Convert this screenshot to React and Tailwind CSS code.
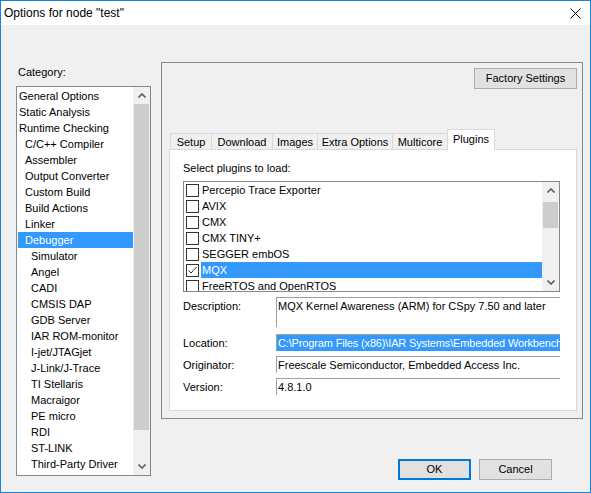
import React from "react";

const categories = [
  ["General Options", 0],
  ["Static Analysis", 0],
  ["Runtime Checking", 0],
  ["C/C++ Compiler", 1],
  ["Assembler", 1],
  ["Output Converter", 1],
  ["Custom Build", 1],
  ["Build Actions", 1],
  ["Linker", 1],
  ["Debugger", 1],
  ["Simulator", 2],
  ["Angel", 2],
  ["CADI", 2],
  ["CMSIS DAP", 2],
  ["GDB Server", 2],
  ["IAR ROM-monitor", 2],
  ["I-jet/JTAGjet", 2],
  ["J-Link/J-Trace", 2],
  ["TI Stellaris", 2],
  ["Macraigor", 2],
  ["PE micro", 2],
  ["RDI", 2],
  ["ST-LINK", 2],
  ["Third-Party Driver", 2],
];

const indent = ["pl-[1px]", "pl-[7px]", "pl-[13px]"];

const plugins = [
  { name: "Percepio Trace Exporter", checked: false },
  { name: "AVIX", checked: false },
  { name: "CMX", checked: false },
  { name: "CMX TINY+", checked: false },
  { name: "SEGGER embOS", checked: false },
  { name: "MQX", checked: true },
  { name: "FreeRTOS and OpenRTOS", checked: false },
];

const tabs = [
  { label: "Setup", w: "w-[41px]" },
  { label: "Download", w: "w-[61px]" },
  { label: "Images", w: "w-[45px]" },
  { label: "Extra Options", w: "w-[75px]" },
  { label: "Multicore", w: "w-[55px]" },
];

const Chevron = ({ down }) => (
  <svg width="8" height="5" viewBox="0 0 8 5">
    <polyline
      points={down ? "0.5,0.5 4,4 7.5,0.5" : "0.5,4.5 4,1 7.5,4.5"}
      fill="none"
      stroke="#606060"
      strokeWidth="1.6"
    />
  </svg>
);

const ScrollBar = ({ thumbTop, thumbHeight }) => (
  <div className="w-[17px] h-full bg-[#f0f0f0] flex flex-col shrink-0">
    <div className="h-[17px] flex items-center justify-center">
      <Chevron />
    </div>
    <div className="bg-[#cdcdcd] mx-[1px]" style={{ marginTop: thumbTop, height: thumbHeight }} />
    <div className="flex-1" />
    <div className="h-[17px] flex items-center justify-center">
      <Chevron down />
    </div>
  </div>
);

const Checkbox = ({ checked }) => (
  <div className="w-[13px] h-[13px] border border-[#333] bg-white shrink-0 flex items-center justify-center">
    {checked && (
      <svg width="11" height="11" viewBox="0 0 11 11">
        <polyline points="1.5,5.5 4,8 9.5,2" fill="none" stroke="#333" strokeWidth="1" />
      </svg>
    )}
  </div>
);

export default function App() {
  return (
    <div className="w-[591px] h-[493px] border border-[#1883d7] bg-[#f0f0f0] flex flex-col overflow-hidden text-[11px] text-black font-['Liberation_Sans',Arial,sans-serif]">
      <div className="h-[24px] bg-white flex items-center justify-between pl-[3px] pr-[9px] shrink-0">
        <span className="text-[12px]">Options for node "test"</span>
        <svg width="11" height="11" viewBox="0 0 11 11">
          <line x1="0.5" y1="0.5" x2="10.5" y2="10.5" stroke="#000" strokeWidth="1" />
          <line x1="10.5" y1="0.5" x2="0.5" y2="10.5" stroke="#000" strokeWidth="1" />
        </svg>
      </div>

      <div className="flex flex-1">
        <div className="ml-[15px] mt-[39px] w-[135px] flex flex-col">
          <div className="leading-[16px] pl-[2px]">Category:</div>
          <div className="mt-[6px] h-[390px] border border-[#828790] bg-white flex">
            <div className="flex-1 pt-[1px] pl-[1px]">
              {categories.map(([label, level]) => (
                <div
                  key={label}
                  className={`h-[16px] leading-[17px] whitespace-nowrap ${indent[level]} ${
                    label === "Debugger" ? "bg-[#3399ff] text-white" : ""
                  }`}
                >
                  {label}
                </div>
              ))}
            </div>
            <ScrollBar thumbTop={0} thumbHeight={326} />
          </div>
        </div>

        <div className="ml-[10px] mt-[37px] flex-1 flex flex-col">
          <div className="w-[422px] h-[357px] border border-[#888] flex flex-col">
            <div className="flex justify-end pr-[5px] pt-[5px]">
              <div className="w-[103px] h-[21px] border border-[#adadad] bg-[#e1e1e1] flex items-center justify-center">
                Factory Settings
              </div>
            </div>

            <div className="mt-[40px] ml-[8px] h-[20px] flex items-end">
              {tabs.map((t) => (
                <div
                  key={t.label}
                  className={`${t.w} h-[16px] border-t border-l border-[#d9d9d9] bg-[#f0f0f0] flex items-center justify-center leading-[14px]`}
                >
                  {t.label}
                </div>
              ))}
              <div className="relative z-10 w-[48px] h-[21px] -mb-[1px] border border-b-0 border-[#d9d9d9] bg-white flex items-start justify-center pt-[2px] leading-[14px]">
                Plugins
              </div>
            </div>

            <div className="ml-[7px] w-[408px] h-[262px] border border-[#d9d9d9] bg-white flex flex-col pl-[13px] pr-[16px]">
              <div className="mt-[11px] leading-[14px]">Select plugins to load:</div>
              <div className="mt-[6px] h-[111px] border border-[#828790] flex overflow-hidden">
                <div className="flex-1 pl-[2px] overflow-hidden">
                  {plugins.map((p) => (
                    <div key={p.name} className="h-[16px] flex items-center">
                      <Checkbox checked={p.checked} />
                      <div
                        className={`ml-[2px] flex-1 h-[16px] leading-[17px] pl-[1px] whitespace-nowrap ${
                          p.checked ? "bg-[#3399ff] text-white" : ""
                        }`}
                      >
                        {p.name}
                      </div>
                    </div>
                  ))}
                </div>
                <ScrollBar thumbTop={3} thumbHeight={26} />
              </div>

              <div className="mt-[5px] flex">
                <div className="w-[93px] pt-[2px] leading-[14px]">Description:</div>
                <div className="flex-1 h-[30px] border-t border-l border-[#a0a0a0] pl-[1px] pt-[1px] leading-[15px] whitespace-nowrap overflow-hidden">
                  MQX Kernel Awareness (ARM) for CSpy 7.50 and later
                </div>
              </div>

              <div className="mt-[7px] flex">
                <div className="w-[93px] pt-[1px] leading-[16px]">Location:</div>
                <div className="flex-1 h-[17px] border-t border-l border-[#a0a0a0] leading-[16px] whitespace-nowrap overflow-hidden">
                  <div className="bg-[#3399ff] text-white pl-[1px] whitespace-nowrap tracking-[-0.15px]">
                    C:\Program Files (x86)\IAR Systems\Embedded Workbench
                  </div>
                </div>
              </div>

              <div className="mt-[5px] flex">
                <div className="w-[93px] pt-[1px] leading-[16px]">Originator:</div>
                <div className="flex-1 h-[17px] border-t border-l border-[#a0a0a0] pl-[1px] leading-[16px] whitespace-nowrap overflow-hidden">
                  Freescale Semiconductor, Embedded Access Inc.
                </div>
              </div>

              <div className="mt-[5px] flex">
                <div className="w-[93px] pt-[1px] leading-[16px]">Version:</div>
                <div className="flex-1 h-[17px] border-t border-l border-[#a0a0a0] pl-[1px] leading-[16px] whitespace-nowrap overflow-hidden">
                  4.8.1.0
                </div>
              </div>
            </div>
          </div>

          <div className="mt-[40px] pr-[38px] flex justify-end gap-[8px]">
            <div className="w-[73px] h-[21px] border-2 border-[#0078d7] bg-[#e1e1e1] flex items-center justify-center">
              OK
            </div>
            <div className="w-[73px] h-[21px] border border-[#adadad] bg-[#e1e1e1] flex items-center justify-center">
              Cancel
            </div>
          </div>
        </div>
      </div>
    </div>
  );
}
